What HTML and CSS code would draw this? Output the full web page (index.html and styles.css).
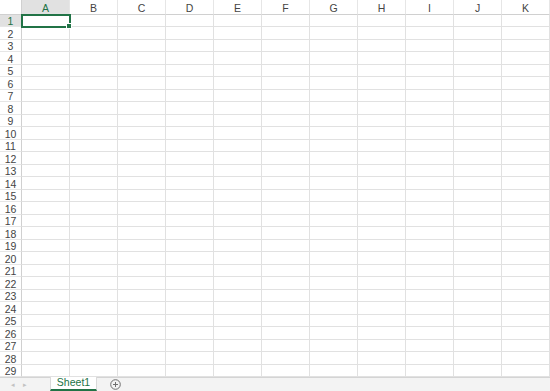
FILE: index.html
```html
<!DOCTYPE html>
<html lang="ja">
<head>
	<meta charset="UTF-8">
	<title>Book1</title>
	<link rel="stylesheet" href="styles.css">
</head>
<body>
	<div class="sheet">
		<div class="grid">
			<table>
				<colgroup>
					<col class="c-head">
					<col><col><col><col><col><col><col><col><col><col><col>
				</colgroup>
				<thead>
					<tr>
						<th class="corner"></th>
						<th class="sel">A</th><th>B</th><th>C</th><th>D</th><th>E</th><th>F</th><th>G</th><th>H</th><th>I</th><th>J</th><th>K</th>
					</tr>
				</thead>
				<tbody>
					<tr><th class="sel">1</th><td class="active"></td><td></td><td></td><td></td><td></td><td></td><td></td><td></td><td></td><td></td><td></td></tr>
					<tr><th>2</th><td></td><td></td><td></td><td></td><td></td><td></td><td></td><td></td><td></td><td></td><td></td></tr>
					<tr><th>3</th><td></td><td></td><td></td><td></td><td></td><td></td><td></td><td></td><td></td><td></td><td></td></tr>
					<tr><th>4</th><td></td><td></td><td></td><td></td><td></td><td></td><td></td><td></td><td></td><td></td><td></td></tr>
					<tr><th>5</th><td></td><td></td><td></td><td></td><td></td><td></td><td></td><td></td><td></td><td></td><td></td></tr>
					<tr><th>6</th><td></td><td></td><td></td><td></td><td></td><td></td><td></td><td></td><td></td><td></td><td></td></tr>
					<tr><th>7</th><td></td><td></td><td></td><td></td><td></td><td></td><td></td><td></td><td></td><td></td><td></td></tr>
					<tr><th>8</th><td></td><td></td><td></td><td></td><td></td><td></td><td></td><td></td><td></td><td></td><td></td></tr>
					<tr><th>9</th><td></td><td></td><td></td><td></td><td></td><td></td><td></td><td></td><td></td><td></td><td></td></tr>
					<tr><th>10</th><td></td><td></td><td></td><td></td><td></td><td></td><td></td><td></td><td></td><td></td><td></td></tr>
					<tr><th>11</th><td></td><td></td><td></td><td></td><td></td><td></td><td></td><td></td><td></td><td></td><td></td></tr>
					<tr><th>12</th><td></td><td></td><td></td><td></td><td></td><td></td><td></td><td></td><td></td><td></td><td></td></tr>
					<tr><th>13</th><td></td><td></td><td></td><td></td><td></td><td></td><td></td><td></td><td></td><td></td><td></td></tr>
					<tr><th>14</th><td></td><td></td><td></td><td></td><td></td><td></td><td></td><td></td><td></td><td></td><td></td></tr>
					<tr><th>15</th><td></td><td></td><td></td><td></td><td></td><td></td><td></td><td></td><td></td><td></td><td></td></tr>
					<tr><th>16</th><td></td><td></td><td></td><td></td><td></td><td></td><td></td><td></td><td></td><td></td><td></td></tr>
					<tr><th>17</th><td></td><td></td><td></td><td></td><td></td><td></td><td></td><td></td><td></td><td></td><td></td></tr>
					<tr><th>18</th><td></td><td></td><td></td><td></td><td></td><td></td><td></td><td></td><td></td><td></td><td></td></tr>
					<tr><th>19</th><td></td><td></td><td></td><td></td><td></td><td></td><td></td><td></td><td></td><td></td><td></td></tr>
					<tr><th>20</th><td></td><td></td><td></td><td></td><td></td><td></td><td></td><td></td><td></td><td></td><td></td></tr>
					<tr><th>21</th><td></td><td></td><td></td><td></td><td></td><td></td><td></td><td></td><td></td><td></td><td></td></tr>
					<tr><th>22</th><td></td><td></td><td></td><td></td><td></td><td></td><td></td><td></td><td></td><td></td><td></td></tr>
					<tr><th>23</th><td></td><td></td><td></td><td></td><td></td><td></td><td></td><td></td><td></td><td></td><td></td></tr>
					<tr><th>24</th><td></td><td></td><td></td><td></td><td></td><td></td><td></td><td></td><td></td><td></td><td></td></tr>
					<tr><th>25</th><td></td><td></td><td></td><td></td><td></td><td></td><td></td><td></td><td></td><td></td><td></td></tr>
					<tr><th>26</th><td></td><td></td><td></td><td></td><td></td><td></td><td></td><td></td><td></td><td></td><td></td></tr>
					<tr><th>27</th><td></td><td></td><td></td><td></td><td></td><td></td><td></td><td></td><td></td><td></td><td></td></tr>
					<tr><th>28</th><td></td><td></td><td></td><td></td><td></td><td></td><td></td><td></td><td></td><td></td><td></td></tr>
					<tr><th>29</th><td></td><td></td><td></td><td></td><td></td><td></td><td></td><td></td><td></td><td></td><td></td></tr>
				</tbody>
			</table>
		</div>
		<div class="tabbar">
			<div class="nav">
				<span class="arrow">&#9666;</span>
				<span class="arrow">&#9656;</span>
			</div>
			<div class="tab">Sheet1</div>
			<div class="add">
				<svg width="11" height="11" viewBox="0 0 11 11">
					<circle cx="5.5" cy="5.5" r="4.8" fill="none" stroke="#6f6f6f" stroke-width="1"/>
					<path d="M5.5 3v5M3 5.5h5" stroke="#6f6f6f" stroke-width="1"/>
				</svg>
			</div>
		</div>
	</div>
</body>
</html>
```

FILE: styles.css
```css
html,body{margin: 0;padding: 0;background: #fff;}
body{font-family: "Liberation Sans", "Noto Sans", sans-serif;overflow: hidden;}

.sheet{width: 550px;height: 391px;display: flex;flex-direction: column;}
.grid{height: 377px;overflow: hidden;}

table{border-spacing: 0;table-layout: fixed;width: 550px;}
col{width: 48px;}
col.c-head{width: 22px;}

th,td{padding: 0;box-sizing: border-box;border-right: 1px solid #e1e1e1;border-bottom: 1px solid #e1e1e1;}
th{font-weight: normal;font-size: 10.5px;color: #444;line-height: 10px;padding-top: 1px;}

thead th{height: 15px;padding-top: 2px;border-bottom-color: #d0d0d0;border-right-color: #e6e6e6;}
thead th.corner{background: #fff;border-right-color: #d0d0d0;}
thead th.sel{background: #e1e1e1;color: #217346;border-bottom: 1px solid #217346;}

tbody tr{height: 12px;}
tbody tr:nth-child(even){height: 13px;}
tbody th{border-right-color: #d0d0d0;border-bottom-color: #e6e6e6;text-align: center;}
tbody tr:nth-child(even) th{padding-top: 2px;}
tbody th.sel{background: #e1e1e1;color: #217346;border-right: 1px solid #217346;}

td.active{position: relative;outline: 2px solid #217346;outline-offset: -1px;}
td.active::after{content: "";position: absolute;right: -3px;bottom: -3px;width: 4px;height: 4px;background: #217346;border: 1px solid #fff;}

.tabbar{height: 14px;background: #f3f3f3;border-top: 1px solid #d4d4d4;box-sizing: border-box;display: flex;align-items: stretch;font-size: 10.5px;}
.nav{width: 50px;display: flex;align-items: center;gap: 8px;padding-left: 11px;box-sizing: border-box;}
.arrow{color: #c2c2c2;font-size: 7px;line-height: 1;}
.tab{width: 47px;background: #fff;color: #217346;text-align: center;line-height: 11px;border-bottom: 2px solid #217346;border-left: 1px solid #dadada;border-right: 1px solid #dadada;box-sizing: border-box;margin-top: -1px;}
.add{display: flex;align-items: center;padding-left: 13px;}
.add svg{display: block;}
```
